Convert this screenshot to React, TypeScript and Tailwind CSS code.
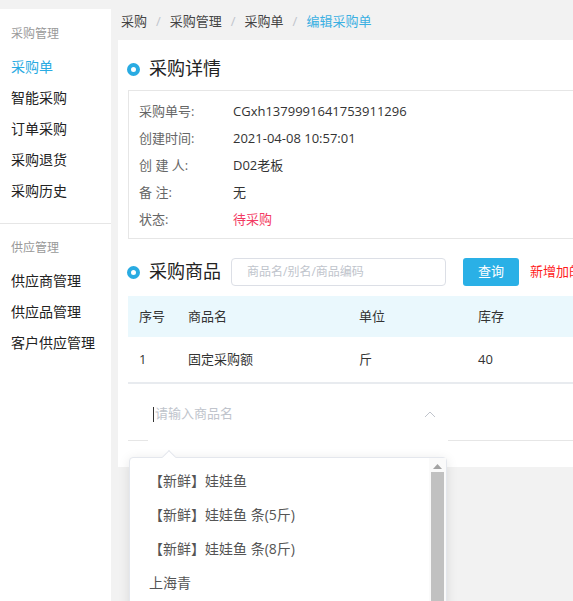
import React from "react";

const font = "font-['Open_Sans','Noto_Sans_CJK_SC',sans-serif]";

const details = [
  { label: "采购单号:", value: "CGxh1379991641753911296" },
  { label: "创建时间:", value: "2021-04-08 10:57:01" },
  { label: "创 建 人:", value: "D02老板" },
  { label: "备 注:", value: "无" },
  { label: "状态:", value: "待采购", red: true },
];

const options = ["【新鲜】娃娃鱼", "【新鲜】娃娃鱼 条(5斤)", "【新鲜】娃娃鱼 条(8斤)", "上海青"];

function SideGroup({ title, items, active }: { title: string; items: string[]; active?: string }) {
  return (
    <div>
      <div className="h-[31px] flex items-center pl-[11px] text-[12px] text-[#999]">{title}</div>
      <div className="mt-[2px]">
        {items.map((item) => (
          <div
            key={item}
            className={`h-[31px] flex items-center pl-[11px] text-[14px] ${
              item === active ? "text-[#29abe2]" : "text-[#222]"
            }`}
          >
            {item}
          </div>
        ))}
      </div>
    </div>
  );
}

function SectionTitle({ text }: { text: string }) {
  return (
    <div className="h-[24px] flex items-center gap-[9px] shrink-0">
      <span className="ml-[-1px] w-[13px] h-[13px] rounded-full border-4 border-[#29abe2]" />
      <span className="text-[18px] leading-[22px] pb-[2px] text-[#222]">{text}</span>
    </div>
  );
}

export default function App() {
  return (
    <div className={`w-[573px] h-[601px] bg-[#f2f2f2] overflow-hidden flex ${font}`}>
      {/* sidebar */}
      <div className="w-[111px] shrink-0 mt-[9px] bg-white pt-[9px]">
        <SideGroup title="采购管理" items={["采购单", "智能采购", "订单采购", "采购退货", "采购历史"]} active="采购单" />
        <div className="mt-[17px] border-t border-[#e6e6e6]" />
        <div className="mt-[8px]">
          <SideGroup title="供应管理" items={["供应商管理", "供应品管理", "客户供应管理"]} />
        </div>
      </div>

      {/* main */}
      <div className="flex-1 min-w-0 pl-[7px] flex flex-col">
        <div className="h-[40px] flex items-center pt-[3px] pl-[3px] text-[13px] text-[#444] whitespace-nowrap">
          <span>采购</span>
          <span className="mx-[9px] text-[#c0c4cc]">/</span>
          <span>采购管理</span>
          <span className="mx-[9px] text-[#c0c4cc]">/</span>
          <span>采购单</span>
          <span className="mx-[9px] text-[#c0c4cc]">/</span>
          <span className="text-[#3ab0e2]">编辑采购单</span>
        </div>

        <div className="h-[427px] bg-white pl-[10px] pt-[17px] w-[520px]">
          <SectionTitle text="采购详情" />

          <div className="mt-[9px] border-y border-l border-[#e6e6e6] h-[149px] pt-[7px] pl-[10px]">
            {details.map((d) => (
              <div key={d.label} className="h-[27px] flex items-center text-[13px]">
                <span className="w-[94px] text-[#666] whitespace-pre">{d.label}</span>
                <span className={d.red ? "text-[#f33a62]" : "text-[#333]"}>{d.value}</span>
              </div>
            ))}
          </div>

          <div className="mt-[19px] h-[28px] flex items-center whitespace-nowrap">
            <SectionTitle text="采购商品" />
            <div className="ml-[10px] w-[215px] h-[28px] shrink-0 border border-[#dcdfe6] rounded-[4px] flex items-center pl-[15px] text-[12px] text-[#c0c4cc]">
              商品名/别名/商品编码
            </div>
            <button className="ml-[17px] w-[56px] h-[28px] shrink-0 rounded-[3px] bg-[#2ab0e6] text-white text-[13px]">
              查询
            </button>
            <span className="ml-[11px] text-[13px] text-[#ff1a1a]">新增加的商品请先保存</span>
          </div>

          {/* table */}
          <div className="mt-[10px] text-[13px] text-[#333]">
            <div className="h-[41px] bg-[#eaf8fd] flex items-center">
              <span className="w-[60px] pl-[11px]">序号</span>
              <span className="w-[171px]">商品名</span>
              <span className="w-[119px]">单位</span>
              <span>库存</span>
            </div>
            <div className="h-[47px] border-b-2 border-[#e8ebef] flex items-center">
              <span className="w-[60px] pl-[11px]">1</span>
              <span className="w-[171px]">固定采购额</span>
              <span className="w-[119px]">斤</span>
              <span>40</span>
            </div>

            <div className="relative flex h-[57px]">
              <div className="w-[20px] border-b border-[#e6e6e6]" />
              <div className="w-[300px] flex items-center pt-[3px] pl-[5px] pr-[12px]">
                <span className="w-px h-[15px] bg-[#333]" />
                <span className="ml-[1px] flex-1 text-[13px] text-[#c0c4cc]">请输入商品名</span>
                <svg width="12" height="7" viewBox="0 0 12 7" fill="none">
                  <path d="M1 6 L6 1 L11 6" stroke="#c0c4cc" strokeWidth="1" />
                </svg>
              </div>
              <div className="flex-1 border-b border-[#e6e6e6]" />

              {/* dropdown */}
              <div className="absolute left-[1px] top-[73px] w-[318px] h-[160px] bg-white border border-[#e4e7ed] rounded-[4px] shadow-[0_2px_12px_rgba(0,0,0,0.1)] z-10">
                <div className="absolute left-[34px] top-[-6px] w-[10px] h-[10px] bg-white border-l border-t border-[#e4e7ed] rotate-45" />
                <div className="flex h-full">
                  <div className="flex-1 pt-[5px]">
                    {options.map((o) => (
                      <div key={o} className="h-[34px] flex items-center pl-[19px] text-[14px] text-[#555] whitespace-nowrap">
                        {o}
                      </div>
                    ))}
                  </div>
                  <div className="w-[17px] bg-[#fafafa] flex flex-col items-center pt-[6px]">
                    <svg width="9" height="5" viewBox="0 0 9 5">
                      <path d="M0 5 L4.5 0 L9 5 Z" fill="#a3a3a3" />
                    </svg>
                    <div className="mt-[3px] w-[13px] flex-1 bg-[#c1c1c1]" />
                  </div>
                </div>
              </div>
            </div>
          </div>
        </div>
      </div>
    </div>
  );
}
